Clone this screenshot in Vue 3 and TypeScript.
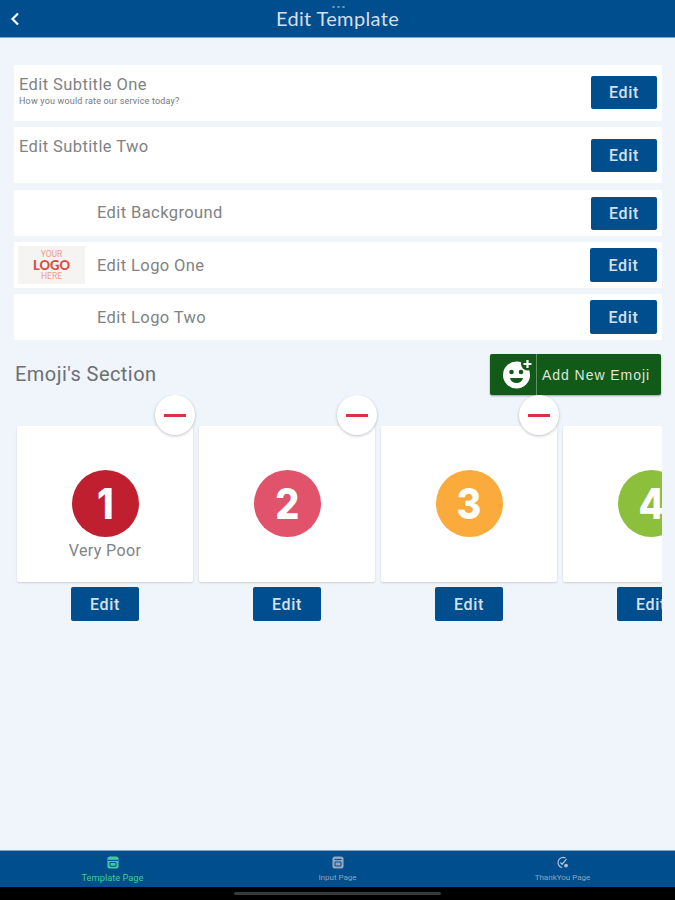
<script setup lang="ts">
interface Row { title: string; sub?: string; kind: 'tall' | 'short'; logo?: boolean; indent?: boolean }
const rows: Row[] = [
  { title: 'Edit Subtitle One', sub: 'How you would rate our service today?', kind: 'tall' },
  { title: 'Edit Subtitle Two', kind: 'tall' },
  { title: 'Edit Background', kind: 'short', indent: true },
  { title: 'Edit Logo One', kind: 'short', indent: true, logo: true },
  { title: 'Edit Logo Two', kind: 'short', indent: true },
]
const cards = [
  { n: 1, color: '#bf1f2f', label: 'Very Poor' },
  { n: 2, color: '#e1526b', label: '' },
  { n: 3, color: '#fbab3c', label: '' },
  { n: 4, color: '#8cc03c', label: '' },
]
const tabs = [
  { label: 'Template Page', active: true, icon: 'template' },
  { label: 'Input Page', active: false, icon: 'input' },
  { label: 'ThankYou Page', active: false, icon: 'thanks' },
]
</script>

<template>
  <div class="screen">
    <header class="topbar">
      <svg class="back" width="12" height="16" viewBox="0 0 12 16"><path d="M9 2.500 3.500 8 9 13.500" fill="none" stroke="#fff" stroke-width="2.200" /></svg>
      <h1 class="title">Edit Template</h1>
      <div class="dots"><i></i><i></i><i></i></div>
    </header>

    <main class="content">
      <section class="rows">
        <div v-for="r in rows" :key="r.title" class="row" :class="r.kind">
          <div v-if="r.indent" class="thumb">
            <div v-if="r.logo" class="logo">
              <span class="l1">YOUR</span><span class="l2">LOGO</span><span class="l1">HERE</span>
            </div>
          </div>
          <div class="row-text" :class="{ indented: r.indent }">
            <div class="row-title">{{ r.title }}</div>
            <div v-if="r.sub" class="row-sub">{{ r.sub }}</div>
          </div>
          <button class="btn">Edit</button>
        </div>
      </section>

      <section class="section-head">
        <h2 class="section-title">Emoji's Section</h2>
        <button class="add">
          <span class="add-icon">
            <svg width="46" height="41" viewBox="0 0 46 41">
              <circle cx="26.500" cy="21" r="13.500" fill="#fff" />
              <circle cx="21.500" cy="18" r="2.300" fill="#125a17" />
              <circle cx="31" cy="18" r="2.300" fill="#125a17" />
              <path d="M20 24h13c-.7 3.300-3.200 5-6.500 5s-5.800-1.700-6.500-5z" fill="#125a17" />
              <circle cx="37.500" cy="10" r="6.500" fill="#125a17" />
              <path d="M37.500 6v8M33.500 10h8" stroke="#fff" stroke-width="2.200" />
            </svg>
          </span>
          <span class="add-label">Add New Emoji</span>
        </button>
      </section>

      <section class="cards">
        <div v-for="c in cards" :key="c.n" class="card-col">
          <div class="card">
            <div class="circle" :style="{ background: c.color }"><span class="digit">{{ c.n }}</span></div>
            <div class="card-label">{{ c.label }}</div>
            <div class="remove"><i></i></div>
          </div>
          <button class="btn card-btn">Edit</button>
        </div>
      </section>
    </main>

    <nav class="tabs">
      <div v-for="t in tabs" :key="t.label" class="tab" :class="{ active: t.active }">
        <svg v-if="t.icon === 'template'" width="12" height="13" viewBox="0 0 14 15">
          <rect x="0.500" y="0.500" width="13" height="14" rx="3" fill="#41c9a0" />
          <path d="M1 5h12" stroke="#00508f" stroke-width="1.300" />
          <rect x="3.500" y="7.500" width="7" height="4.500" rx="1" fill="none" stroke="#00508f" stroke-width="1.200" />
        </svg>
        <svg v-else-if="t.icon === 'input'" width="12" height="13" viewBox="0 0 14 15">
          <rect x="0.500" y="0.500" width="13" height="14" rx="3" fill="#97a5bb" />
          <path d="M3 4h8" stroke="#00508f" stroke-width="1.300" />
          <rect x="3.500" y="7" width="7" height="4.500" rx="1" fill="none" stroke="#00508f" stroke-width="1.200" />
        </svg>
        <svg v-else width="14" height="13" viewBox="0 0 16 15">
          <path d="M11 2.300A6 6 0 1 0 7 13.500" fill="none" stroke="#b3bfd0" stroke-width="1.400" />
          <path d="M5 7.500l2 2 5-6" fill="none" stroke="#b3bfd0" stroke-width="1.400" />
          <circle cx="11.500" cy="11" r="2.200" fill="#b3bfd0" />
        </svg>
        <span class="tab-label">{{ t.label }}</span>
      </div>
    </nav>
    <div class="gesture"><i></i></div>
  </div>
</template>

<style>
html, body { margin: 0; padding: 0; background: #f0f4fb; }
</style>

<style scoped>
.screen {
  width: 675px;
  height: 900px;
  display: flex;
  flex-direction: column;
  background: #f0f4fb;
  font-family: Roboto, "Liberation Sans", sans-serif;
  overflow: hidden;
}
.topbar {
  position: relative;
  height: 37px;
  flex: none;
  background: #004e8d;
  border-bottom: 1px solid #7fa5c7;
  display: flex;
  align-items: center;
  justify-content: center;
}
.back { position: absolute; left: 9px; top: 11px; }
.title {
  margin: 0 0 2px;
  color: #d5dfeb;
  font-family: Lato, sans-serif;
  font-size: 20px;
  font-weight: 400;
  letter-spacing: 0.350px;
}
.dots { position: absolute; left: 332px; top: 6px; display: flex; gap: 2px; }
.dots i { width: 3px; height: 2px; background: #6f9ac0; border-radius: 50%; }
.content { flex: 1; min-height: 0; padding: 27px 13px 0 14px; }
.rows { display: flex; flex-direction: column; gap: 6px; }
.row {
  display: flex;
  background: #fff;
  box-sizing: border-box;
  padding-left: 5px;
  padding-right: 5px;
  position: relative;
  align-items: center;
}
.row.tall { height: 56px; align-items: flex-start; padding-top: 10px; }
.row.short { height: 46px; }
.row.tall .btn { margin-top: 1px; }
.row:nth-child(-n+3) .btn { width: 66px; height: 33px; }
.row:nth-child(2) { margin-bottom: 1px; }
.row:nth-child(2) .btn { margin-top: 2px; }
.row:nth-child(n+4) .row-title { margin-top: 2px; }
.thumb { width: 67px; height: 38px; flex: none; margin-left: -1px; }
.logo {
  width: 67px;
  height: 38px;
  background: #f5f4f2;
  display: flex;
  flex-direction: column;
  align-items: center;
  justify-content: center;
}
.l1 { font-size: 8.500px; line-height: 9px; color: #ee9a90; }
.l2 { font-size: 13px; font-weight: 900; color: #dd4b40; font-family: Lato, sans-serif; line-height: 13px; }
.row-text { flex: 1; min-width: 0; }
.row-text.indented { padding-left: 12px; }
.row-title { font-size: 16.500px; color: #808285; line-height: 20px; letter-spacing: 0.400px; }
.row-sub { font-size: 9px; color: #76787b; line-height: 10px; margin-top: 1px; letter-spacing: 0.180px; }
.btn {
  width: 67px;
  height: 34px;
  flex: none;
  border: 0;
  border-radius: 2px;
  padding: 0;
  background: #004e8d;
  color: #d5e0ec;
  font-family: Roboto, sans-serif;
  font-size: 16px;
  font-weight: 500;
  letter-spacing: 0.700px;
}
.section-head {
  display: flex;
  justify-content: space-between;
  align-items: center;
  margin-top: 14px;
  padding-left: 1px;
  padding-right: 1px;
}
.section-title { margin: 0 0 2px; font-size: 20px; font-weight: 400; color: #6a7075; letter-spacing: 0.450px; }
.add {
  width: 171px;
  height: 41px;
  display: flex;
  align-items: center;
  padding: 0;
  border: 0;
  border-radius: 2px;
  background: #125a17;
  box-shadow: 0 1px 2px rgba(0, 0, 0, 0.350);
}
.add-icon {
  width: 47px;
  height: 41px;
  box-sizing: border-box;
  border-right: 1px solid #5f9163;
  display: flex;
}
.add-label {
  padding-left: 5px;
  color: #dde6dd;
  font-size: 14px;
  font-weight: 500;
  letter-spacing: 0.950px;
  white-space: nowrap;
}
.cards {
  display: flex;
  gap: 6px;
  padding-left: 3px;
  padding-top: 31px;
  overflow: hidden;
  height: 230px;
}
.card-col { width: 176px; flex: none; display: flex; flex-direction: column; align-items: center; }
.card {
  position: relative;
  width: 176px;
  height: 156px;
  background: #fff;
  border-radius: 2px;
  box-shadow: 0 1px 2px rgba(40, 50, 70, 0.180);
  display: flex;
  flex-direction: column;
  align-items: center;
}
.circle {
  width: 67px;
  height: 67px;
  margin-top: 44px;
  border-radius: 50%;
  display: flex;
  align-items: center;
  justify-content: center;
  color: #fff;
  font-family: Inter, sans-serif;
  font-size: 42px;
  font-weight: 800;
  line-height: 1;
}
.digit { display: block; transform: scaleX(0.9); }
.card-label { margin-top: 4px; font-size: 16px; color: #808285; line-height: 20px; letter-spacing: 0.400px; }
.remove {
  position: absolute;
  right: -2px;
  top: -31px;
  width: 40px;
  height: 40px;
  border-radius: 50%;
  background: #fff;
  box-shadow: 0 1px 3px rgba(40, 50, 70, 0.300);
  display: flex;
  align-items: center;
  justify-content: center;
}
.remove i { width: 22px; height: 3px; background: #d8343f; }
.card-btn { margin-top: 5px; width: 68px; }
.tabs {
  flex: none;
  height: 36px;
  margin-top: auto;
  background: #004e8d;
  border-top: 1px solid #7fa5c7;
  display: grid;
  grid-template-columns: 1fr 1fr 1fr;
}
.tab {
  display: flex;
  flex-direction: column;
  align-items: center;
  padding-top: 5px;
  box-sizing: border-box;
  gap: 4px;
}
.tab-label { font-size: 8px; line-height: 10px; color: #8ea3bf; white-space: nowrap; }
.tab.active .tab-label { font-size: 9.300px; color: #41c9a0; }
.gesture {
  flex: none;
  height: 13px;
  background: #000;
  display: flex;
  justify-content: center;
  align-items: center;
}
.gesture i { width: 207px; height: 3px; border-radius: 2px; background: #3a3a3a; margin-left: -1px; }
</style>
